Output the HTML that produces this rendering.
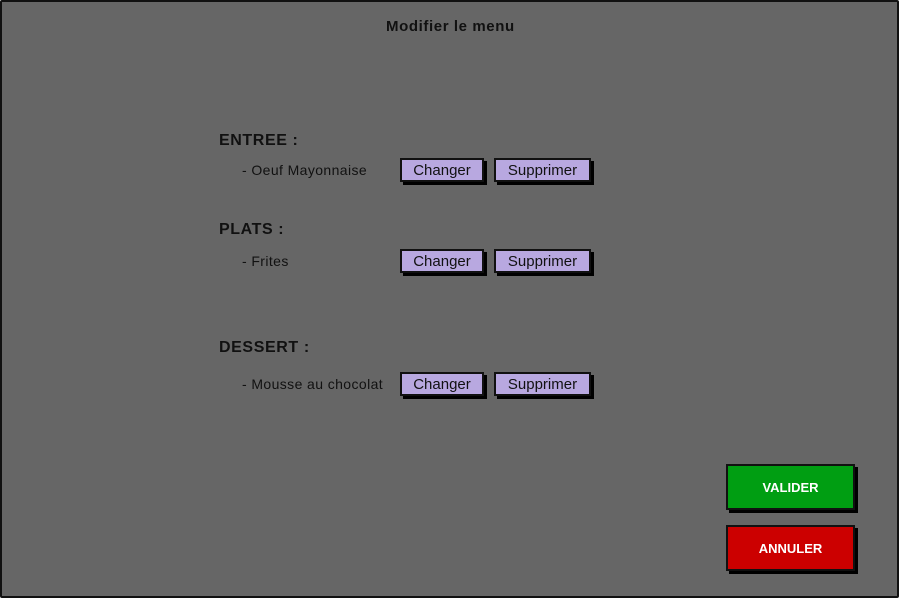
<!DOCTYPE html>
<html><head><style>
body{margin:0;width:899px;height:598px;background:#fff;position:relative;overflow:hidden;font-family:"Liberation Sans",sans-serif}
.frame{position:absolute;left:0;top:0;width:895px;height:594px;background:#666;border:2px solid #111;border-radius:2px}
.t{position:absolute;color:#111;white-space:nowrap}
.h{font-weight:bold;font-size:16px;letter-spacing:.6px}
.s{font-size:14px;letter-spacing:.4px}
.b{position:absolute;background:#b8a8e0;border:2px solid #111;box-shadow:3px 3px 0 #000;font-size:15px;color:#111;text-align:center;box-sizing:border-box;height:24px;line-height:21px}
.big{position:absolute;width:129px;height:46px;border:2px solid #111;box-shadow:3px 3px 0 #000;box-sizing:border-box;color:#fff;font-weight:bold;font-size:13px;text-align:center;line-height:44px}
</style></head><body>
<div class="frame"></div>
<div class="t" style="left:386px;top:18px;font-size:15px;font-weight:bold;letter-spacing:.6px">Modifier le menu</div>
<div class="t h" style="left:219px;top:132px">ENTREE :</div>
<div class="t s" style="left:242px;top:162px">- Oeuf Mayonnaise</div>
<div class="b" style="left:400px;top:158px;width:84px">Changer</div>
<div class="b" style="left:494px;top:158px;width:97px">Supprimer</div>
<div class="t h" style="left:219px;top:221px">PLATS :</div>
<div class="t s" style="left:242px;top:253px">- Frites</div>
<div class="b" style="left:400px;top:249px;width:84px">Changer</div>
<div class="b" style="left:494px;top:249px;width:97px">Supprimer</div>
<div class="t h" style="left:219px;top:339px">DESSERT :</div>
<div class="t s" style="left:242px;top:376px">- Mousse au chocolat</div>
<div class="b" style="left:400px;top:372px;width:84px">Changer</div>
<div class="b" style="left:494px;top:372px;width:97px">Supprimer</div>
<div class="big" style="left:726px;top:464px;background:#009e12">VALIDER</div>
<div class="big" style="left:726px;top:525px;background:#cc0000">ANNULER</div>
</body></html>
